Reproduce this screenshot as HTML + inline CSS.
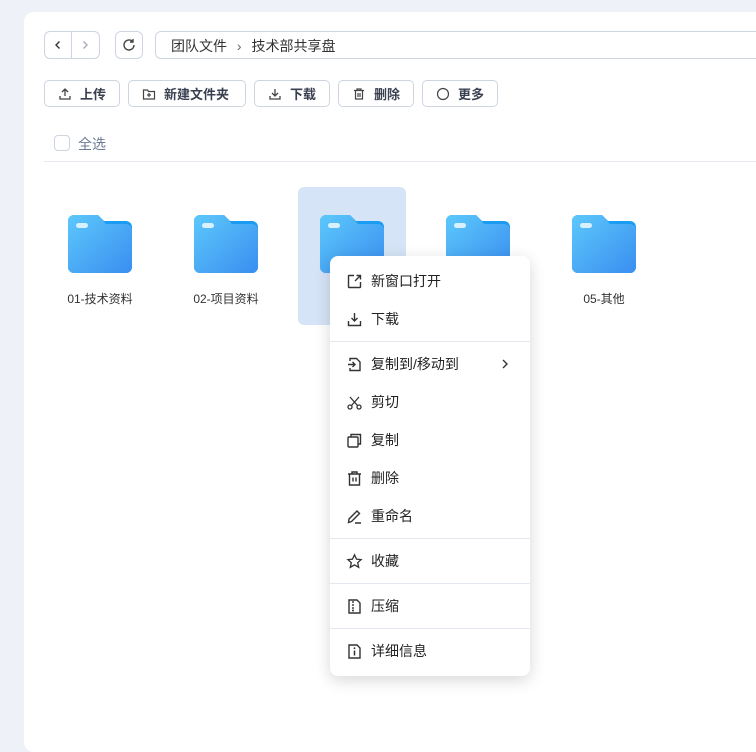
<!DOCTYPE html><html><head><meta charset="utf-8"><style>
*{box-sizing:border-box;margin:0;padding:0}
body{width:756px;height:734px;background:#eef2f8;font-family:"Liberation Sans","Noto Sans CJK SC",sans-serif;position:relative;overflow:hidden;color:#333}
.card{position:absolute;left:24px;top:12px;width:760px;height:740px;background:#fff;border-radius:10px}
.ab{position:absolute}
.bx{position:absolute;border:1px solid #cdd5e0;border-radius:6px;background:#fff}
.btn{position:absolute;top:80px;height:27px;border:1px solid #cdd5e0;border-radius:5px;font-size:13px;font-weight:bold;color:#3a4050;display:flex;align-items:center;padding-left:13px;gap:8px}
.btn svg{width:14px;height:14px}
.fold{position:absolute;top:215px;width:64px;height:58px}
.lbl{position:absolute;top:290px;width:120px;text-align:center;font-size:12px;color:#333}
.menu{position:absolute;left:330px;top:256px;width:200px;height:420px;background:#fff;border-radius:8px;box-shadow:0 4px 16px rgba(0,0,0,.16)}
.it{position:absolute;left:0;width:200px;height:24px;font-size:14px;color:#222;display:flex;align-items:center}
.it svg{position:absolute;left:16px;width:17px;height:17px}
.it span{position:absolute;left:41px}
.dv{position:absolute;left:0;width:200px;height:1px;background:#e3e7ee}
</style></head><body>
<div class="card"></div>
<div class="bx" style="left:44px;top:31px;width:56px;height:28px"></div>
<div class="ab" style="left:71px;top:32px;width:1px;height:26px;background:#cdd5e0"></div>
<svg class="ab" style="left:52px;top:39px" width="12" height="12" viewBox="0 0 12 12"><path d="M7.5 2.5 4 6l3.5 3.5" fill="none" stroke="#333" stroke-width="1.4"/></svg>
<svg class="ab" style="left:79px;top:39px" width="12" height="12" viewBox="0 0 12 12"><path d="M4.5 2.5 8 6 4.5 9.5" fill="none" stroke="#aab" stroke-width="1.4"/></svg>
<div class="bx" style="left:115px;top:31px;width:28px;height:28px"></div>
<svg class="ab" style="left:120px;top:36px" width="18" height="18" viewBox="0 0 18 18"><path d="M14 9a5 5 0 1 1-1.5-3.6M13 3v3h-3" fill="none" stroke="#444" stroke-width="1.4"/></svg>
<div class="bx" style="left:155px;top:31px;width:620px;height:28px;font-size:14px;color:#333;padding:4px 0 0 15px">团队文件 <span style="color:#666;margin:0 6px">›</span> 技术部共享盘</div>
<div class="btn" style="left:44px;width:76px"><svg viewBox="0 0 14 14"><path d="M7 9V2M4 5l3-3 3 3M2 9v3h10V9" fill="none" stroke="#444" stroke-width="1.3"/></svg>上传</div>
<div class="btn" style="left:128px;width:118px"><svg viewBox="0 0 14 14"><path d="M1.5 3h4l1 1.5h6v7.5h-11z M7 6v4M5 8h4" fill="none" stroke="#444" stroke-width="1.2"/></svg>新建文件夹</div>
<div class="btn" style="left:254px;width:76px"><svg viewBox="0 0 14 14"><path d="M7 2v7M4 6l3 3 3-3M2 9v3h10V9" fill="none" stroke="#444" stroke-width="1.3"/></svg>下载</div>
<div class="btn" style="left:338px;width:76px"><svg viewBox="0 0 14 14"><path d="M2 3.5h10M5 3.5V2h4v1.5M3.5 3.5v8.5h7V3.5M6 6v4M8 6v4" fill="none" stroke="#444" stroke-width="1.2"/></svg>删除</div>
<div class="btn" style="left:422px;width:76px"><svg viewBox="0 0 14 14"><circle cx="7" cy="7" r="5.5" fill="none" stroke="#444" stroke-width="1.2"/></svg>更多</div>
<div class="bx" style="left:54px;top:135px;width:16px;height:16px;border-radius:4px"></div>
<div class="ab" style="left:78px;top:134px;font-size:14px;color:#6b7a95">全选</div>
<div class="ab" style="left:44px;top:161px;width:720px;height:1px;background:#e6e9ef"></div>
<div class="ab" style="left:298px;top:187px;width:108px;height:138px;background:#d6e4f7;border-radius:6px"></div>
<svg width="0" height="0" style="position:absolute"><defs>
<linearGradient id="g" x1="0" y1="0" x2="1" y2="1"><stop offset="0" stop-color="#5cc8fb"/><stop offset="1" stop-color="#3a8ef0"/></linearGradient></defs></svg>
<div id="f"></div>
<script></script>
<svg class="fold" style="left:68px" viewBox="0 0 64 58"><path d="M6 0h24l6 6h22a6 6 0 0 1 6 6v40a6 6 0 0 1-6 6H6a6 6 0 0 1-6-6V6a6 6 0 0 1 6-6z" fill="#1a9cf3"/><path d="M6 0h24l8 9h20a6 6 0 0 1 6 6v37a6 6 0 0 1-6 6H6a6 6 0 0 1-6-6V6a6 6 0 0 1 6-6z" fill="url(#g)"/><rect x="8" y="8" width="12" height="5" rx="2.5" fill="#d9f1ff"/></svg>
<svg class="fold" style="left:194px" viewBox="0 0 64 58"><path d="M6 0h24l6 6h22a6 6 0 0 1 6 6v40a6 6 0 0 1-6 6H6a6 6 0 0 1-6-6V6a6 6 0 0 1 6-6z" fill="#1a9cf3"/><path d="M6 0h24l8 9h20a6 6 0 0 1 6 6v37a6 6 0 0 1-6 6H6a6 6 0 0 1-6-6V6a6 6 0 0 1 6-6z" fill="url(#g)"/><rect x="8" y="8" width="12" height="5" rx="2.5" fill="#d9f1ff"/></svg>
<svg class="fold" style="left:320px" viewBox="0 0 64 58"><path d="M6 0h24l6 6h22a6 6 0 0 1 6 6v40a6 6 0 0 1-6 6H6a6 6 0 0 1-6-6V6a6 6 0 0 1 6-6z" fill="#1a9cf3"/><path d="M6 0h24l8 9h20a6 6 0 0 1 6 6v37a6 6 0 0 1-6 6H6a6 6 0 0 1-6-6V6a6 6 0 0 1 6-6z" fill="url(#g)"/><rect x="8" y="8" width="12" height="5" rx="2.5" fill="#d9f1ff"/></svg>
<svg class="fold" style="left:446px" viewBox="0 0 64 58"><path d="M6 0h24l6 6h22a6 6 0 0 1 6 6v40a6 6 0 0 1-6 6H6a6 6 0 0 1-6-6V6a6 6 0 0 1 6-6z" fill="#1a9cf3"/><path d="M6 0h24l8 9h20a6 6 0 0 1 6 6v37a6 6 0 0 1-6 6H6a6 6 0 0 1-6-6V6a6 6 0 0 1 6-6z" fill="url(#g)"/><rect x="8" y="8" width="12" height="5" rx="2.5" fill="#d9f1ff"/></svg>
<svg class="fold" style="left:572px" viewBox="0 0 64 58"><path d="M6 0h24l6 6h22a6 6 0 0 1 6 6v40a6 6 0 0 1-6 6H6a6 6 0 0 1-6-6V6a6 6 0 0 1 6-6z" fill="#1a9cf3"/><path d="M6 0h24l8 9h20a6 6 0 0 1 6 6v37a6 6 0 0 1-6 6H6a6 6 0 0 1-6-6V6a6 6 0 0 1 6-6z" fill="url(#g)"/><rect x="8" y="8" width="12" height="5" rx="2.5" fill="#d9f1ff"/></svg>
<div class="lbl" style="left:40px">01-技术资料</div>
<div class="lbl" style="left:166px">02-项目资料</div>
<div class="lbl" style="left:292px">03-</div>
<div class="lbl" style="left:544px">05-其他</div>
<div class="menu">
<div class="it" style="top:13px"><svg viewBox="0 0 17 17"><path d="M8 2.5H3a.5.5 0 0 0-.5.5v11a.5.5 0 0 0 .5.5h11a.5.5 0 0 0 .5-.5V9M9 8l5-5M10.5 2.5h4v4" fill="none" stroke="#333" stroke-width="1.4"/></svg><span>新窗口打开</span></div>
<div class="it" style="top:51px"><svg viewBox="0 0 17 17"><path d="M8.5 2v8M5.5 7l3 3 3-3M2.5 10v4.5h12V10" fill="none" stroke="#333" stroke-width="1.4"/></svg><span>下载</span></div>
<div class="dv" style="top:85px"></div>
<div class="it" style="top:96px"><svg viewBox="0 0 17 17"><path d="M4 5V2.5h6.5l3.5 3.5v8.5H4V12M2 8.5h7M6.5 6l2.5 2.5L6.5 11" fill="none" stroke="#333" stroke-width="1.4"/></svg><span>复制到/移动到</span><svg style="left:170px;width:10px;height:10px" viewBox="0 0 10 10"><path d="M3 1l4 4-4 4" fill="none" stroke="#333" stroke-width="1.4"/></svg></div>
<div class="it" style="top:134px"><svg viewBox="0 0 17 17"><circle cx="4" cy="13" r="2" fill="none" stroke="#333" stroke-width="1.3"/><circle cx="13" cy="13" r="2" fill="none" stroke="#333" stroke-width="1.3"/><path d="M5.5 11.5 13 3M11.5 11.5 4 3" fill="none" stroke="#333" stroke-width="1.3"/></svg><span>剪切</span></div>
<div class="it" style="top:172px"><svg viewBox="0 0 17 17"><rect x="2" y="5" width="10" height="10" rx="1" fill="none" stroke="#333" stroke-width="1.4"/><path d="M5 5V2.5h9.5V12H12" fill="none" stroke="#333" stroke-width="1.4"/></svg><span>复制</span></div>
<div class="it" style="top:210px"><svg viewBox="0 0 17 17"><path d="M2 4h13M6 4V2h5v2M3.5 4v11h10V4M7 7.5v4M10 7.5v4" fill="none" stroke="#333" stroke-width="1.4"/></svg><span>删除</span></div>
<div class="it" style="top:248px"><svg viewBox="0 0 17 17"><path d="M2.5 14.5 3 11l8-8 2.5 2.5-8 8zM9 15h6" fill="none" stroke="#333" stroke-width="1.4"/></svg><span>重命名</span></div>
<div class="dv" style="top:282px"></div>
<div class="it" style="top:293px"><svg viewBox="0 0 17 17"><path d="M8.5 1.8l2 4.3 4.6.5-3.4 3.1 1 4.6-4.2-2.4-4.2 2.4 1-4.6-3.4-3.1 4.6-.5z" fill="none" stroke="#333" stroke-width="1.3"/></svg><span>收藏</span></div>
<div class="dv" style="top:327px"></div>
<div class="it" style="top:338px"><svg viewBox="0 0 17 17"><path d="M3 2h8l3 3v10H3zM7 3v2M7 6v2M7 9v2" fill="none" stroke="#333" stroke-width="1.4"/><circle cx="7" cy="12.5" r="1" fill="#333"/></svg><span>压缩</span></div>
<div class="dv" style="top:372px"></div>
<div class="it" style="top:383px"><svg viewBox="0 0 17 17"><path d="M3 2h8l3 3v10H3z" fill="none" stroke="#333" stroke-width="1.4"/><path d="M8.5 7.5v5" stroke="#333" stroke-width="1.5"/><circle cx="8.5" cy="5.2" r=".9" fill="#333"/></svg><span>详细信息</span></div>
</div>
</body></html>
